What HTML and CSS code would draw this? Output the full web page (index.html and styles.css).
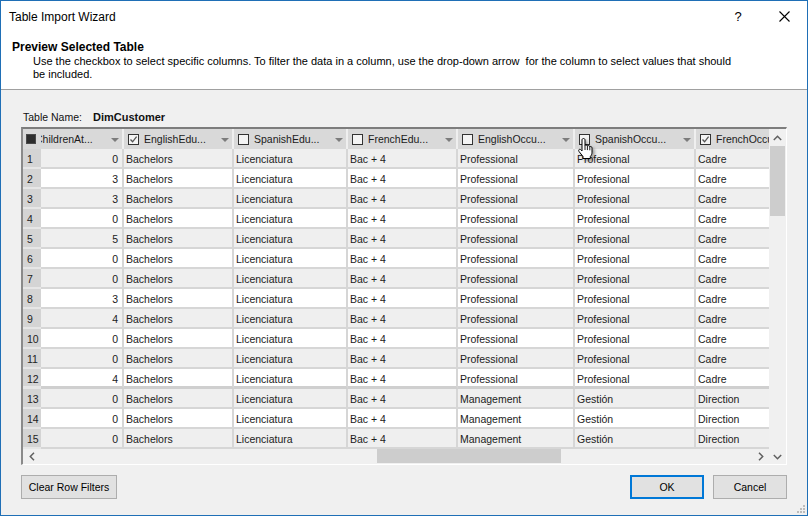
FILE: index.html
```html
<!DOCTYPE html>
<html>
<head>
<meta charset="utf-8">
<link rel="stylesheet" href="styles.css">
</head>
<body>
<div class="window">
  <div class="titlebar">
    <div class="title">Table Import Wizard</div>
    <div class="tb-btn help">?</div>
    <div class="tb-btn close"><svg width="11" height="11" viewBox="0 0 11 11"><path d="M0.5 0.5L10.5 10.5M10.5 0.5L0.5 10.5" stroke="#000" stroke-width="1.1" fill="none"/></svg></div>
  </div>
  <div class="intro">
    <div class="intro-title">Preview Selected Table</div>
    <div class="intro-desc">Use the checkbox to select specific columns. To filter the data in a column, use the drop-down arrow&nbsp; for the column to select values that should<br>be included.</div>
  </div>
  <div class="body">
    <div class="tname">Table Name:<span class="tname-val">DimCustomer</span></div>
    <div class="grid">
      <div class="main">
        <div class="row head">
          <div class="cell rn"><span class="cb ind"></span></div>
          <div class="cell h1"><span class="htext">ChildrenAt...</span><span class="dd"></span></div>
          <div class="cell"><span class="cb"><svg width="9" height="9" viewBox="0 0 9 9"><path d="M1.5 4.5L3.6 6.8L7.6 1.6" stroke="#555" stroke-width="1.3" fill="none"/></svg></span><span class="htext">EnglishEdu...</span><span class="dd"></span></div>
          <div class="cell"><span class="cb"></span><span class="htext">SpanishEdu...</span><span class="dd"></span></div>
          <div class="cell"><span class="cb"></span><span class="htext">FrenchEdu...</span><span class="dd"></span></div>
          <div class="cell"><span class="cb"></span><span class="htext">EnglishOccu...</span><span class="dd"></span></div>
          <div class="cell"><span class="cb"></span><span class="htext">SpanishOccu...</span><span class="dd"></span></div>
          <div class="cell"><span class="cb"><svg width="9" height="9" viewBox="0 0 9 9"><path d="M1.5 4.5L3.6 6.8L7.6 1.6" stroke="#555" stroke-width="1.3" fill="none"/></svg></span><span class="htext fixed">FrenchOccupation</span></div>
        </div>
        <div class="row odd"><div class="cell rn">1</div><div class="cell num">0</div><div class="cell">Bachelors</div><div class="cell">Licenciatura</div><div class="cell">Bac + 4</div><div class="cell">Professional</div><div class="cell">Profesional</div><div class="cell">Cadre</div></div>
        <div class="row"><div class="cell rn">2</div><div class="cell num">3</div><div class="cell">Bachelors</div><div class="cell">Licenciatura</div><div class="cell">Bac + 4</div><div class="cell">Professional</div><div class="cell">Profesional</div><div class="cell">Cadre</div></div>
        <div class="row odd"><div class="cell rn">3</div><div class="cell num">3</div><div class="cell">Bachelors</div><div class="cell">Licenciatura</div><div class="cell">Bac + 4</div><div class="cell">Professional</div><div class="cell">Profesional</div><div class="cell">Cadre</div></div>
        <div class="row"><div class="cell rn">4</div><div class="cell num">0</div><div class="cell">Bachelors</div><div class="cell">Licenciatura</div><div class="cell">Bac + 4</div><div class="cell">Professional</div><div class="cell">Profesional</div><div class="cell">Cadre</div></div>
        <div class="row odd"><div class="cell rn">5</div><div class="cell num">5</div><div class="cell">Bachelors</div><div class="cell">Licenciatura</div><div class="cell">Bac + 4</div><div class="cell">Professional</div><div class="cell">Profesional</div><div class="cell">Cadre</div></div>
        <div class="row"><div class="cell rn">6</div><div class="cell num">0</div><div class="cell">Bachelors</div><div class="cell">Licenciatura</div><div class="cell">Bac + 4</div><div class="cell">Professional</div><div class="cell">Profesional</div><div class="cell">Cadre</div></div>
        <div class="row odd"><div class="cell rn">7</div><div class="cell num">0</div><div class="cell">Bachelors</div><div class="cell">Licenciatura</div><div class="cell">Bac + 4</div><div class="cell">Professional</div><div class="cell">Profesional</div><div class="cell">Cadre</div></div>
        <div class="row"><div class="cell rn">8</div><div class="cell num">3</div><div class="cell">Bachelors</div><div class="cell">Licenciatura</div><div class="cell">Bac + 4</div><div class="cell">Professional</div><div class="cell">Profesional</div><div class="cell">Cadre</div></div>
        <div class="row odd"><div class="cell rn">9</div><div class="cell num">4</div><div class="cell">Bachelors</div><div class="cell">Licenciatura</div><div class="cell">Bac + 4</div><div class="cell">Professional</div><div class="cell">Profesional</div><div class="cell">Cadre</div></div>
        <div class="row"><div class="cell rn">10</div><div class="cell num">0</div><div class="cell">Bachelors</div><div class="cell">Licenciatura</div><div class="cell">Bac + 4</div><div class="cell">Professional</div><div class="cell">Profesional</div><div class="cell">Cadre</div></div>
        <div class="row odd"><div class="cell rn">11</div><div class="cell num">0</div><div class="cell">Bachelors</div><div class="cell">Licenciatura</div><div class="cell">Bac + 4</div><div class="cell">Professional</div><div class="cell">Profesional</div><div class="cell">Cadre</div></div>
        <div class="row sep"><div class="cell rn">12</div><div class="cell num">4</div><div class="cell">Bachelors</div><div class="cell">Licenciatura</div><div class="cell">Bac + 4</div><div class="cell">Professional</div><div class="cell">Profesional</div><div class="cell">Cadre</div></div>
        <div class="row odd"><div class="cell rn">13</div><div class="cell num">0</div><div class="cell">Bachelors</div><div class="cell">Licenciatura</div><div class="cell">Bac + 4</div><div class="cell">Management</div><div class="cell">Gestión</div><div class="cell">Direction</div></div>
        <div class="row"><div class="cell rn">14</div><div class="cell num">0</div><div class="cell">Bachelors</div><div class="cell">Licenciatura</div><div class="cell">Bac + 4</div><div class="cell">Management</div><div class="cell">Gestión</div><div class="cell">Direction</div></div>
        <div class="row odd"><div class="cell rn">15</div><div class="cell num">0</div><div class="cell">Bachelors</div><div class="cell">Licenciatura</div><div class="cell">Bac + 4</div><div class="cell">Management</div><div class="cell">Gestión</div><div class="cell">Direction</div></div>
        <div class="hscroll">
          <div class="sbtn"><svg width="6" height="9" viewBox="0 0 6 9"><path d="M5 0.8L1.3 4.5L5 8.2" stroke="#606060" stroke-width="1.5" fill="none"/></svg></div>
          <div class="htrack"><div class="hthumb"></div></div>
          <div class="sbtn"><svg width="6" height="9" viewBox="0 0 6 9"><path d="M1 0.8L4.7 4.5L1 8.2" stroke="#606060" stroke-width="1.5" fill="none"/></svg></div>
        </div>
      </div>
      <div class="vscroll">
        <div class="vbtn up"><svg width="9" height="6" viewBox="0 0 9 6"><path d="M0.8 5L4.5 1.3L8.2 5" stroke="#606060" stroke-width="1.5" fill="none"/></svg></div>
        <div class="vthumb"></div>
        <div class="vtrack"></div>
        <div class="vbtn down"><svg width="9" height="6" viewBox="0 0 9 6"><path d="M0.8 1L4.5 4.7L8.2 1" stroke="#606060" stroke-width="1.5" fill="none"/></svg></div>
      </div>
    </div>
    <div class="buttons">
      <button class="btn clear">Clear Row Filters</button>
      <div class="spacer"></div>
      <button class="btn ok">OK</button>
      <button class="btn cancel">Cancel</button>
    </div>
  </div>
  <svg class="cursor" width="18" height="22" viewBox="0 0 18 22"><path d="M5,2 c0,-0.9 0.6,-1.5 1.5,-1.5 c0.9,0 1.5,0.6 1.5,1.5 v5.5 c0.2,-0.4 0.6,-0.6 1.1,-0.6 c0.7,0 1.3,0.5 1.3,1.2 c0.2,-0.3 0.6,-0.5 1.1,-0.5 c0.7,0 1.3,0.5 1.3,1.2 c0.2,-0.2 0.5,-0.3 0.9,-0.3 c0.8,0 1.3,0.6 1.3,1.4 v4.3 c0,1.9 -0.7,3.2 -1.7,4.3 v2 h-7.3 v-2 l-3.9,-4.9 c-0.6,-0.8 -0.6,-1.6 0,-2.1 c0.6,-0.4 1.4,-0.2 2.1,0.6 l0.8,0.9 z" fill="#fff" stroke="#000" stroke-width="1"/><path d="M8,7.5 v4.5 M10.4,8.1 v4 M12.8,8.8 v3.5" stroke="#000" stroke-width="0.9" fill="none"/></svg>
  <svg class="grip" width="9" height="9" viewBox="0 0 9 9"><rect x="7" y="1" width="2" height="2" fill="#bcbcbc"/><rect x="4" y="4" width="2" height="2" fill="#bcbcbc"/><rect x="7" y="4" width="2" height="2" fill="#bcbcbc"/><rect x="1" y="7" width="2" height="2" fill="#bcbcbc"/><rect x="4" y="7" width="2" height="2" fill="#bcbcbc"/><rect x="7" y="7" width="2" height="2" fill="#bcbcbc"/></svg>
</div>
</body>
</html>
```

FILE: styles.css
```css
* { box-sizing: border-box; }
body { margin: 0; font-family: "Liberation Sans", Arial, sans-serif; color: #000; }

.window {
  position: relative;
  width: 808px;
  height: 516px;
  border: 1px solid #1f6fb6;
  background: #f0f0f0;
  display: flex;
  flex-direction: column;
  overflow: hidden;
}

.titlebar {
  height: 30px;
  flex: none;
  background: #fff;
  display: flex;
  align-items: center;
  font-size: 12px;
}
.title { flex: 1; padding-left: 8px; padding-top: 1px; }
.tb-btn {
  width: 46px;
  height: 30px;
  display: flex;
  align-items: center;
  justify-content: center;
  font-size: 13px;
}
.tb-btn.help { padding-top: 1px; }

.intro {
  flex: none;
  height: 59px;
  background: #fff;
  border-bottom: 1px solid #a0a0a0;
  padding: 9px 0 0 11px;
  font-size: 12px;
}
.intro-title { font-weight: bold; line-height: 14px; }
.intro-desc { padding-left: 21px; line-height: 13px; padding-top: 1px; white-space: nowrap; font-size: 11px; }

.body {
  flex: 1;
  padding: 20px 20px 0;
  display: flex;
  flex-direction: column;
}
.tname { font-size: 10.5px; line-height: 14px; padding-left: 2px; color: #111; }
.tname-val { font-weight: bold; font-size: 11px; margin-left: 11px; }

.grid {
  margin-top: 3px;
  height: 338px;
  flex: none;
  border-style: solid;
  border-width: 2px 1px 1px 2px;
  border-color: #7d7d7d #fff #fff #8a8a8a;
  display: flex;
  background: #f0f0f0;
}
.main {
  width: 746px;
  display: flex;
  flex-direction: column;
  overflow: hidden;
}
.row {
  display: grid;
  grid-template-columns: 18px 83px 110px 114px 110px 117px 121px 73px;
  height: 20px;
  flex: none;
}
.cell {
  height: 20px;
  background: #fff;
  border-right: 2px solid #d6d6d6;
  border-bottom: 2px solid #d6d6d6;
  padding: 2px 2px 0;
  line-height: 16px;
  font-size: 10.5px;
  white-space: nowrap;
  overflow: hidden;
  color: #1b1b1b;
}
.row.odd .cell { background: #efefef; }
.row.sep .cell { border-bottom: 3px solid #cfcfcf; }
.cell:last-child { border-right: none; }
.cell.num { text-align: right; padding-right: 4px; }
.row .cell.rn {
  background: #d4d4d4;
  border-right: none;
  border-bottom-color: #e6e6e6;
  padding-left: 4px;
  color: #222;
}

.row.head .cell {
  background: #d9d9d9;
  border-bottom: none;
  border-right-color: #efefef;
  display: flex;
  align-items: center;
  padding: 0 3px 0 4px;
}
.row.head .cell:last-child { border-right: none; }
.row.head .cell.rn { padding-left: 3px; }
.row.head .cell.h1 { padding-left: 0; }
.h1 .htext { margin-left: -6px; }

.cb {
  width: 11px;
  height: 11px;
  flex: none;
  border: 1px solid #333;
  background: #f4f4f4;
  margin-right: 5px;
  display: flex;
  align-items: center;
  justify-content: center;
}
.cb.ind { width: 10px; height: 10px; background: #2e2e2e; border-color: #4a4a4a; }
.htext { flex: 1; overflow: hidden; white-space: nowrap; }
.htext.fixed { flex: none; }
.dd {
  flex: none;
  width: 0;
  height: 0;
  border-left: 4px solid transparent;
  border-right: 4px solid transparent;
  border-top: 4px solid #7c7c7c;
  margin-top: 1px;
}

.hscroll {
  height: 15px;
  flex: none;
  display: flex;
  background: #f0f0f0;
}
.sbtn {
  width: 17px;
  display: flex;
  align-items: center;
  justify-content: center;
}
.htrack { flex: 1; }
.hthumb { margin-left: 337px; width: 184px; height: 14px; background: #cdcdcd; }

.vscroll {
  width: 17px;
  display: flex;
  flex-direction: column;
  background: #f0f0f0;
}
.vbtn { display: flex; align-items: center; justify-content: center; flex: none; }
.vbtn.up { height: 17px; }
.vbtn.down { height: 15px; }
.vthumb { height: 70px; margin-left: 1px; width: 15px; background: #cdcdcd; flex: none; }
.vtrack { flex: 1; }

.buttons {
  display: flex;
  gap: 9px;
  margin-top: 10px;
}
.spacer { flex: 1; }
.btn {
  height: 24px;
  border: 1px solid #adadad;
  background: #e1e1e1;
  font-family: "Liberation Sans", Arial, sans-serif;
  font-size: 10.5px;
  color: #000;
  padding: 0;
}
.btn.clear { width: 96px; }
.btn.ok { width: 74px; border: 2px solid #0078d7; }
.btn.cancel { width: 74px; }

.cursor {
  position: absolute;
  left: 576px;
  top: 137px;
  filter: drop-shadow(2px 2px 1.5px rgba(0,0,0,0.35));
}
.grip { position: absolute; right: 2px; bottom: 2px; }
```
